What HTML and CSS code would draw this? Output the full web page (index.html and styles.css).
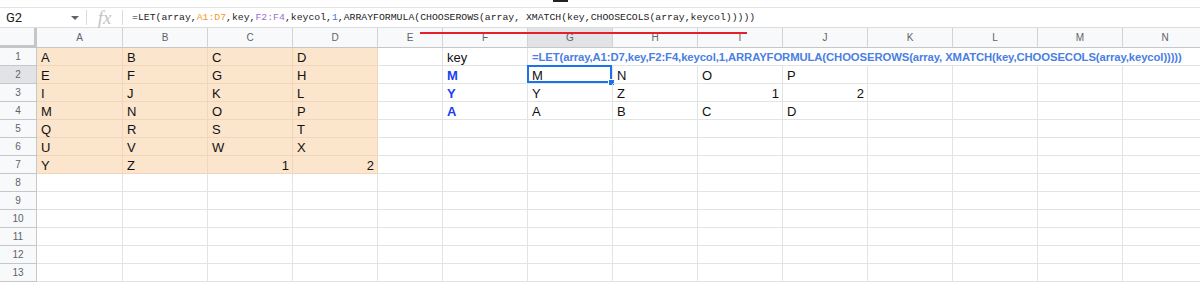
FILE: index.html
```html
<!DOCTYPE html>
<html lang="en">
<head>
    <meta charset="UTF-8">
    <title>Sheet</title>
    <link rel="stylesheet" href="styles.css">
</head>
<body>
    <div class="topline"><span class="mark"></span></div>
    <div class="fbar">
        <div class="namebox"><span>G2</span><i class="caret"></i></div>
        <span class="sep"></span>
        <span class="fx">fx</span>
        <span class="sep"></span>
        <div class="formula">=LET(array,<span class="r-orange">A1:D7</span>,key,<span class="r-purple">F2:F4</span>,keycol,<span class="r-blue">1</span>,ARRAYFORMULA(CHOOSEROWS(array, XMATCH(key,CHOOSECOLS(array,keycol)))))</div>
    </div>
    <div class="mark-red"></div>
    <div class="sheet">
        <table class="grid">
            <colgroup>
                <col style="width:37px"><col style="width:86px"><col style="width:85px"><col style="width:85px"><col style="width:85px"><col style="width:65px"><col style="width:85px"><col style="width:85px"><col style="width:85px"><col style="width:85px"><col style="width:85px"><col style="width:85px"><col style="width:85px"><col style="width:85px"><col style="width:85px">
            </colgroup>
            <tr class="head">
                <th class="corner"></th><th>A</th><th>B</th><th>C</th><th>D</th><th>E</th><th>F</th><th class="sel">G</th><th>H</th><th>I</th><th>J</th><th>K</th><th>L</th><th>M</th><th>N</th>
            </tr>
            <tr>
                <th>1</th><td class="o">A</td><td class="o">B</td><td class="o">C</td><td class="o">D</td><td></td><td>key</td>
                <td class="fml" colspan="8">=LET(array,A1:D7,key,F2:F4,keycol,1,ARRAYFORMULA(CHOOSEROWS(array, XMATCH(key,CHOOSECOLS(array,keycol)))))</td>
            </tr>
            <tr>
                <th class="sel">2</th><td class="o">E</td><td class="o">F</td><td class="o">G</td><td class="o">H</td><td></td><td class="key">M</td>
                <td class="active">M<span class="box"><i class="handle"></i></span></td><td>N</td><td>O</td><td>P</td><td></td><td></td><td></td><td></td>
            </tr>
            <tr>
                <th>3</th><td class="o">I</td><td class="o">J</td><td class="o">K</td><td class="o">L</td><td></td><td class="key">Y</td>
                <td>Y</td><td>Z</td><td class="num">1</td><td class="num">2</td><td></td><td></td><td></td><td></td>
            </tr>
            <tr>
                <th>4</th><td class="o">M</td><td class="o">N</td><td class="o">O</td><td class="o">P</td><td></td><td class="key">A</td>
                <td>A</td><td>B</td><td>C</td><td>D</td><td></td><td></td><td></td><td></td>
            </tr>
            <tr>
                <th>5</th><td class="o">Q</td><td class="o">R</td><td class="o">S</td><td class="o">T</td><td></td><td></td><td></td><td></td><td></td><td></td><td></td><td></td><td></td><td></td>
            </tr>
            <tr>
                <th>6</th><td class="o">U</td><td class="o">V</td><td class="o">W</td><td class="o">X</td><td></td><td></td><td></td><td></td><td></td><td></td><td></td><td></td><td></td><td></td>
            </tr>
            <tr>
                <th>7</th><td class="o">Y</td><td class="o">Z</td><td class="o num">1</td><td class="o num">2</td><td></td><td></td><td></td><td></td><td></td><td></td><td></td><td></td><td></td><td></td>
            </tr>
            <tr><th>8</th><td></td><td></td><td></td><td></td><td></td><td></td><td></td><td></td><td></td><td></td><td></td><td></td><td></td><td></td></tr>
            <tr><th>9</th><td></td><td></td><td></td><td></td><td></td><td></td><td></td><td></td><td></td><td></td><td></td><td></td><td></td><td></td></tr>
            <tr><th>10</th><td></td><td></td><td></td><td></td><td></td><td></td><td></td><td></td><td></td><td></td><td></td><td></td><td></td><td></td></tr>
            <tr><th>11</th><td></td><td></td><td></td><td></td><td></td><td></td><td></td><td></td><td></td><td></td><td></td><td></td><td></td><td></td></tr>
            <tr><th>12</th><td></td><td></td><td></td><td></td><td></td><td></td><td></td><td></td><td></td><td></td><td></td><td></td><td></td><td></td></tr>
            <tr><th>13</th><td></td><td></td><td></td><td></td><td></td><td></td><td></td><td></td><td></td><td></td><td></td><td></td><td></td><td></td></tr>
        </table>
    </div>
</body>
</html>
```

FILE: styles.css
```css
*{
    padding: 0;
    margin: 0;
    box-sizing: border-box;
}
body{
    width: 1200px;
    height: 284px;
    overflow: hidden;
    position: relative;
    background-color: #fff;
    font-family: "Liberation Sans", Arial, sans-serif;
}
.topline{
    height: 7px;
    position: relative;
}
.topline .mark{
    position: absolute;
    left: 553px;
    top: 0;
    width: 15px;
    height: 2px;
    background-color: #222;
}
.fbar{
    height: 21px;
    display: flex;
    align-items: center;
    border-top: 1px solid #e3e3e3;
    border-bottom: 1px solid #dcdcdc;
}
.namebox{
    width: 86px;
    display: flex;
    align-items: center;
    justify-content: space-between;
    padding: 0 7px 0 6px;
    font-family: Roboto, "Liberation Sans", sans-serif;
    font-size: 13px;
    color: #202124;
}
.caret{
    width: 0;
    height: 0;
    border-left: 4px solid transparent;
    border-right: 4px solid transparent;
    border-top: 4px solid #5f6368;
}
.sep{
    width: 1px;
    height: 15px;
    background-color: #dadce0;
}
.fx{
    width: 35px;
    text-align: center;
    font-family: "Liberation Serif", serif;
    font-style: italic;
    font-size: 19px;
    line-height: 18px;
    color: #c4c4c4;
}
.formula{
    padding-left: 9px;
    font-family: "Liberation Mono", monospace;
    font-size: 9.8px;
    color: #222;
    white-space: nowrap;
}
.r-orange{
    color: #f09a28;
}
.r-purple{
    color: #9b6fd1;
}
.r-blue{
    color: #3b78e7;
}
.mark-red{
    position: absolute;
    left: 420px;
    top: 32px;
    width: 327px;
    height: 2px;
    background-color: #e5202a;
    z-index: 2;
}
.sheet{
    width: 1200px;
    overflow: hidden;
}
.grid{
    table-layout: fixed;
    width: 1208px;
    border-collapse: separate;
    border-spacing: 0;
}
.grid tr{
    height: 18px;
}
.grid tr.head{
    height: 20px;
}
.grid th{
    background-color: #f8f9fa;
    color: #5f6368;
    font-size: 10px;
    font-weight: normal;
    text-align: center;
    border-right: 1px solid #c7c7c7;
    border-bottom: 1px solid #c7c7c7;
}
.grid .head th{
    border-right: 1px solid #d3d3d3;
}
.grid th.sel{
    background-color: #e1e3e6;
}
.grid th.corner{
    border-right: 3px solid #c4c7c5;
    border-bottom: 3px solid #c4c7c5;
}
.grid td{
    position: relative;
    padding: 2px 3px 0 4px;
    font-size: 13px;
    line-height: 15px;
    color: #111;
    white-space: nowrap;
    border-right: 1px solid #e2e3e3;
    border-bottom: 1px solid #e2e3e3;
}
.grid td.o{
    background-color: #fce5cd;
    border-right-color: #f1d6ba;
    border-bottom-color: #f1d6ba;
}
.grid td.num{
    text-align: right;
}
.grid td.key{
    color: #1b3ff0;
    font-weight: bold;
}
.grid td.fml{
    color: #4a80e3;
    font-weight: bold;
    font-size: 11.3px;
    letter-spacing: -0.1px;
}
.box{
    position: absolute;
    left: -1px;
    top: -1px;
    right: 0;
    bottom: 0;
    border: 2px solid #1a73e8;
}
.handle{
    position: absolute;
    right: -5px;
    bottom: -5px;
    width: 7px;
    height: 7px;
    background-color: #1a73e8;
    border: 1px solid #fff;
}
```
